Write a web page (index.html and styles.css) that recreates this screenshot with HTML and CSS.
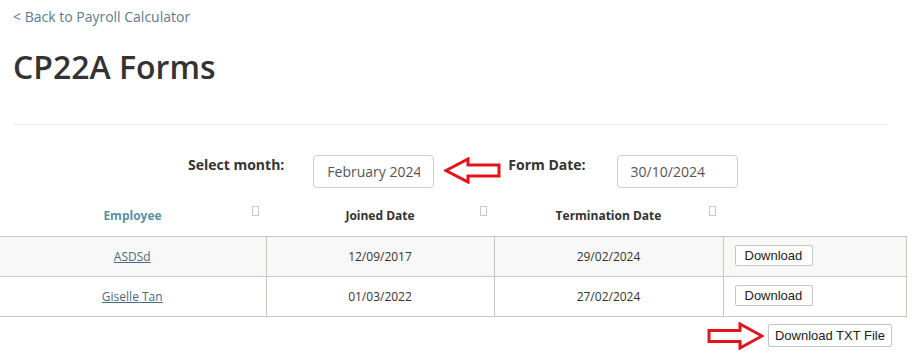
FILE: index.html
```html
<!DOCTYPE html>
<html lang="en">
<head>
    <meta charset="UTF-8">
    <title>CP22A Forms</title>
    <link rel="stylesheet" href="styles.css">
</head>
<body>
    <div class="page">
        <a class="back" href="#">&lt; Back to Payroll Calculator</a>
        <h1>CP22A Forms</h1>
        <hr>

        <div class="filters">
            <label class="lbl-month">Select month:</label>
            <input type="text" class="field" value="February 2024">
            <svg class="arrow arrow-left" width="58" height="27" viewBox="0 0 58 27">
                <path d="M2 13.5 L24 2 L24 8 L55 8 L55 19 L24 19 L24 25 Z" fill="none" stroke="#e3141b" stroke-width="3" stroke-linejoin="miter"/>
            </svg>
            <label class="lbl-date">Form Date:</label>
            <input type="text" class="field" value="30/10/2024">
        </div>

        <table class="forms">
            <thead>
                <tr>
                    <th class="sorted">Employee <span class="sort"></span></th>
                    <th>Joined Date <span class="sort"></span></th>
                    <th>Termination Date <span class="sort"></span></th>
                    <th></th>
                </tr>
            </thead>
            <tbody>
                <tr class="odd">
                    <td><a href="#">ASDSd</a></td>
                    <td>12/09/2017</td>
                    <td>29/02/2024</td>
                    <td class="act"><button>Download</button></td>
                </tr>
                <tr>
                    <td><a href="#">Giselle Tan</a></td>
                    <td>01/03/2022</td>
                    <td>27/02/2024</td>
                    <td class="act"><button>Download</button></td>
                </tr>
            </tbody>
        </table>

        <div class="footer">
            <svg class="arrow" width="58" height="28" viewBox="0 0 58 28">
                <path d="M56 14 L34 2 L34 8.5 L3 8.5 L3 19.5 L34 19.5 L34 26 Z" fill="none" stroke="#e3141b" stroke-width="3" stroke-linejoin="miter"/>
            </svg>
            <button class="txt">Download TXT File</button>
        </div>
    </div>
</body>
</html>
```

FILE: styles.css
```css
body {
    margin: 0;
    font-family: "Open Sans", sans-serif;
    color: #333;
    background: #fff;
}
.page {
    padding: 7px 30px 0 13px;
}
.back {
    display: block;
    font-size: 14px;
    line-height: 20px;
    color: #5b7b90;
    text-decoration: none;
}
h1 {
    margin: 20px 0 0;
    font-size: 32px;
    font-weight: 600;
    line-height: 40px;
    color: #333;
}
hr {
    margin: 37px 0 0;
    border: none;
    border-top: 1px solid #eaeaea;
}
.filters {
    display: flex;
    align-items: flex-start;
    margin-top: 30px;
    padding-left: 175px;
}
.filters label {
    font-size: 14px;
    font-weight: 700;
    line-height: 20px;
    color: #333;
}
.lbl-month {
    margin-right: 29px;
}
.lbl-date {
    margin-left: 6px;
    margin-right: 31px;
}
.field {
    width: 121px;
    height: 33px;
    box-sizing: border-box;
    padding: 0 13px;
    border: 1px solid #ccc;
    border-radius: 4px;
    font-family: "Open Sans", sans-serif;
    font-size: 14px;
    color: #555;
}
.arrow-left {
    margin: 2px 0 0 10px;
}
.forms {
    margin: 12px 0 0 -14px;
    width: 908px;
    border-collapse: collapse;
    table-layout: fixed;
    font-size: 12px;
}
.forms th:nth-child(1) { width: 267px; }
.forms th:nth-child(2) { width: 228px; }
.forms th:nth-child(3) { width: 229px; }
.forms th {
    position: relative;
    height: 36px;
    padding: 0 0 12px;
    box-sizing: border-box;
    vertical-align: bottom;
    font-weight: 700;
    color: #333;
}
.forms th.sorted {
    color: #5b8fa3;
}
.sort {
    position: absolute;
    top: 6px;
    right: 7px;
    width: 5px;
    height: 8px;
    border: 1px solid #c3ccd2;
}
.forms td {
    height: 39px;
    padding: 0;
    text-align: center;
    border: 1px solid #c9c7bd;
    color: #333;
}
.forms td:first-child {
    border-left: none;
}
.forms tr.odd td {
    background: #f8f8f8;
}
.forms td a {
    color: #4a6b80;
}
.forms td.act {
    text-align: left;
    padding-left: 11px;
}
button {
    font-family: "Liberation Sans", Arial, sans-serif;
    font-size: 13px;
    color: #222;
    background: #fff;
    border: 1px solid #c4c4c4;
    border-radius: 2px;
    height: 21px;
    padding: 0 10px 0 9px;
}
.forms td.act button {
    margin-top: -9px;
}
.footer {
    display: flex;
    justify-content: flex-end;
    align-items: center;
    margin: 5px -4px 0 0;
}
.footer .arrow {
    margin-right: 4px;
}
.txt {
    height: 23px;
    padding: 0 6px;
}
```
